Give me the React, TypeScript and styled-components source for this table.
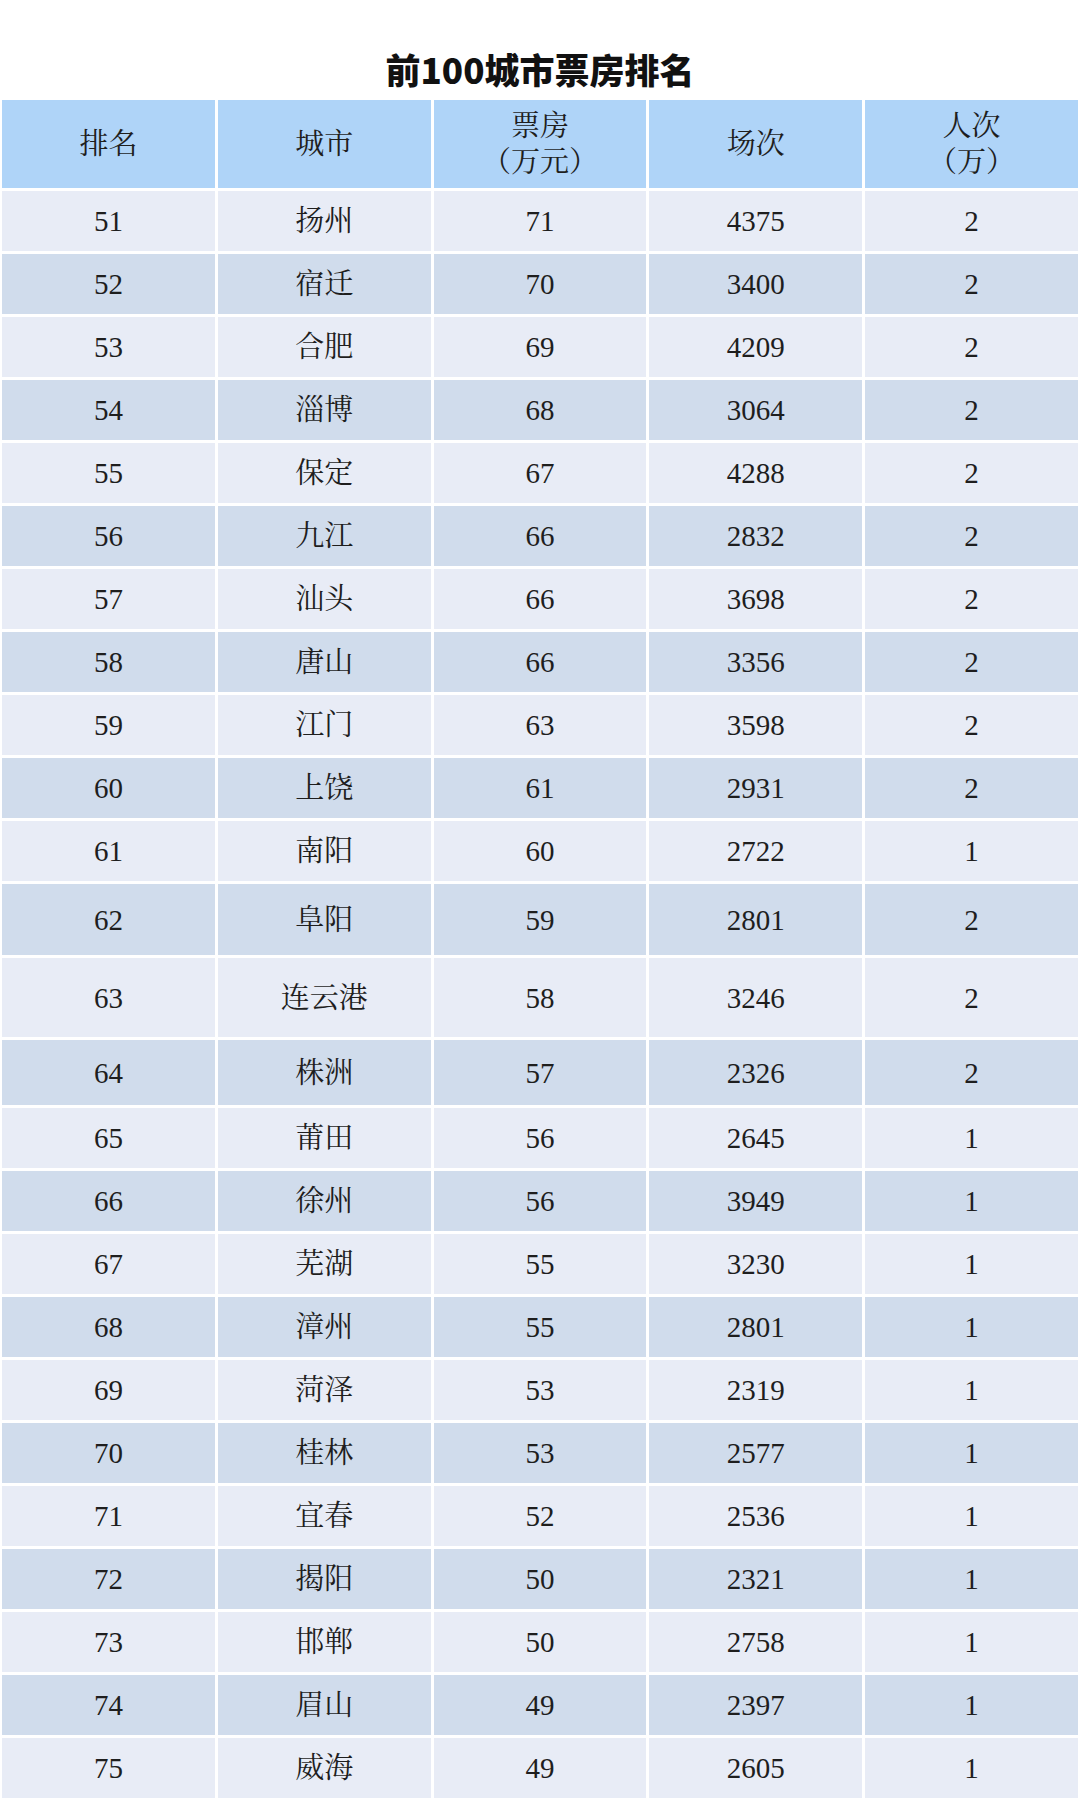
import React from "react";
import styled, { createGlobalStyle } from "styled-components";

const GlobalStyle = createGlobalStyle`
  html, body {
    margin: 0;
    padding: 0;
    background: #ffffff;
  }
  body {
    font-family: "Liberation Serif", "Noto Serif CJK SC", "Noto Sans CJK SC", serif;
    color: #1e1e1e;
  }
`;

const Page = styled.div`
  width: 1080px;
  height: 1800px;
  overflow: hidden;
  background: #ffffff;
`;

const Title = styled.h1`
  margin: 0;
  height: 100px;
  box-sizing: border-box;
  padding-top: 45px;
  line-height: 48px;
  text-align: center;
  font-family: "Noto Sans CJK SC", "Noto Sans", sans-serif;
  font-weight: 900;
  font-size: 35px;
  color: #111111;
`;

const Table = styled.div`
  display: flex;
  flex-direction: column;
  gap: 3px;
  padding: 0 2px;
`;

type Tone = "head" | "light" | "dark";

const toneColor: Record<Tone, string> = {
  head: "#afd4f8",
  light: "#e8ecf6",
  dark: "#d0dcec",
};

const Row = styled.div<{ $h: number }>`
  display: grid;
  grid-template-columns: repeat(5, 1fr);
  column-gap: 3px;
  height: ${(p) => p.$h}px;
`;

const Cell = styled.div<{ $tone: Tone }>`
  display: flex;
  flex-direction: column;
  align-items: center;
  justify-content: center;
  background: ${(p) => toneColor[p.$tone]};
  font-family: "Liberation Serif", "Noto Serif CJK SC", "Noto Sans CJK SC", serif;
  font-size: 29px;
  line-height: 36px;
  color: #1e1e1e;
  text-align: center;
`;

const HeadLine = styled.span`
  display: block;
  white-space: nowrap;
`;

type Item = [number, string, number, number, number, number?];

const data: Item[] = [
  [51, "扬州", 71, 4375, 2],
  [52, "宿迁", 70, 3400, 2],
  [53, "合肥", 69, 4209, 2],
  [54, "淄博", 68, 3064, 2],
  [55, "保定", 67, 4288, 2],
  [56, "九江", 66, 2832, 2],
  [57, "汕头", 66, 3698, 2],
  [58, "唐山", 66, 3356, 2],
  [59, "江门", 63, 3598, 2],
  [60, "上饶", 61, 2931, 2],
  [61, "南阳", 60, 2722, 1],
  [62, "阜阳", 59, 2801, 2, 71],
  [63, "连云港", 58, 3246, 2, 79],
  [64, "株洲", 57, 2326, 2, 65],
  [65, "莆田", 56, 2645, 1],
  [66, "徐州", 56, 3949, 1],
  [67, "芜湖", 55, 3230, 1],
  [68, "漳州", 55, 2801, 1],
  [69, "菏泽", 53, 2319, 1],
  [70, "桂林", 53, 2577, 1],
  [71, "宜春", 52, 2536, 1],
  [72, "揭阳", 50, 2321, 1],
  [73, "邯郸", 50, 2758, 1],
  [74, "眉山", 49, 2397, 1],
  [75, "威海", 49, 2605, 1],
];

const headers: string[][] = [
  ["排名"],
  ["城市"],
  ["票房", "（万元）"],
  ["场次"],
  ["人次", "（万）"],
];

export default function App() {
  return (
    <Page>
      <GlobalStyle />
      <Title>前100城市票房排名</Title>
      <Table>
        <Row $h={88}>
          {headers.map((lines, i) => (
            <Cell key={i} $tone="head">
              {lines.map((l) => (
                <HeadLine key={l}>{l}</HeadLine>
              ))}
            </Cell>
          ))}
        </Row>
        {data.map(([rank, city, box, shows, people, h], idx) => {
          const tone: Tone = idx % 2 === 0 ? "light" : "dark";
          return (
            <Row key={rank} $h={h ?? 60}>
              <Cell $tone={tone}>{rank}</Cell>
              <Cell $tone={tone}>{city}</Cell>
              <Cell $tone={tone}>{box}</Cell>
              <Cell $tone={tone}>{shows}</Cell>
              <Cell $tone={tone}>{people}</Cell>
            </Row>
          );
        })}
      </Table>
    </Page>
  );
}
